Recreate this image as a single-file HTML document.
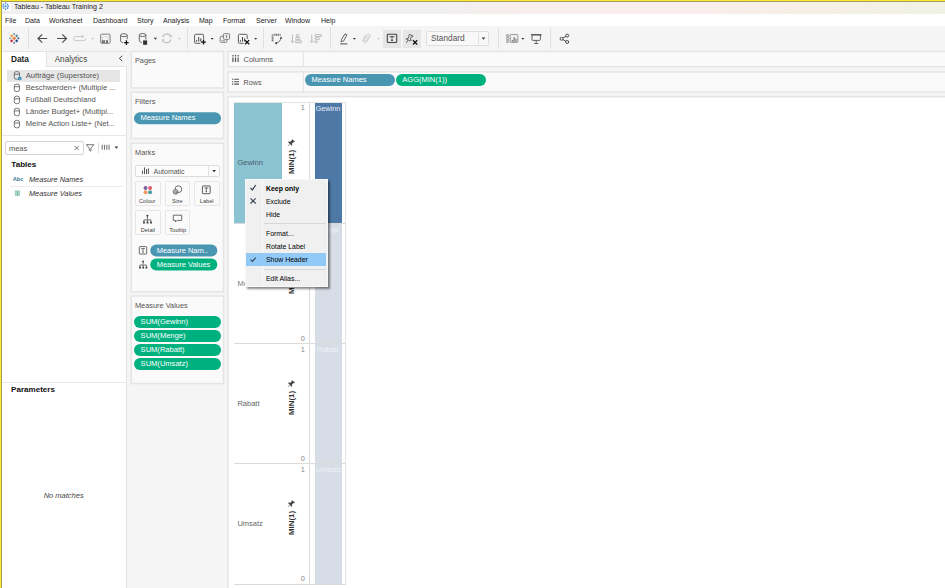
<!DOCTYPE html>
<html>
<head>
<meta charset="utf-8">
<title>Tableau - Tableau Training 2</title>
<style>
html,body{margin:0;padding:0;}
body{width:945px;height:588px;overflow:hidden;background:#fff;position:relative;font-family:"Liberation Sans",sans-serif;font-size:8.3px;color:#333;}
.a{position:absolute;box-sizing:border-box;}
.t{position:absolute;white-space:nowrap;line-height:10px;height:10px;}
.b{font-weight:bold;}
.sx{transform-origin:0 0;}
.i{font-style:italic;}
.card{position:absolute;box-sizing:border-box;background:#fafafa;border:1px solid #e3e3e3;}
.pill{position:absolute;box-sizing:border-box;border-radius:6px;color:#fff;white-space:nowrap;line-height:12px;height:12px;}
.blue{background:#4996b2;}
.green{background:#00b180;}
.mb{background:#fafafa;border:1px solid #e6e6e6;border-radius:1.5px;}
.ax{transform-origin:0 0;transform:rotate(-90deg);font-size:7.9px;color:#333;width:30px;text-align:center;}
.sep{position:absolute;width:1px;background:#e0e0e0;top:28px;height:21px;}
svg{position:absolute;overflow:visible;}
</style>
</head>
<body>

<!-- ===== title bar ===== -->
<div class="a" id="titlebar" style="left:0;top:0;width:945px;height:13.5px;background:linear-gradient(90deg,#f0f0f0 0%,#f0f0f0 45%,#f8eeec 55%,#f9eeeb 75%,#f6f0e4 88%,#f0f3e4 100%);"></div>
<div class="t sx" style="left:14px;top:2.3px;font-size:7.9px;transform:scaleX(0.898);color:#222;">Tableau - Tableau Training 2</div>

<div class="a" style="left:2px;top:2px;width:8.6px;height:9.3px;background:#fdfdfd;"></div>
<svg id="winicon" style="left:0;top:0;" width="14" height="14" viewBox="0 0 14 14" fill="none" stroke="#2b7fd0" stroke-width="0.75">
<path d="M5.6 5v2.4M4.4 6.2h2.4"/>
<path d="M5.6 2.5v1.5M4.9 3.2h1.4M5.6 8.4v1.5M4.9 9.2h1.4M2.3 6.2h1.5M3 5.5v1.4M7.4 6.2h1.5M8.2 5.5v1.4"/>
<path d="M3.6 3.6v1.6M2.8 4.4h1.6M7.6 3.6v1.6M6.8 4.4h1.6M3.6 7.2v1.6M2.8 8h1.6M7.6 7.2v1.6M6.8 8h1.6"/>
</svg>
<!-- ===== menu bar ===== -->
<div class="a" id="menubar" style="left:0;top:13.5px;width:945px;height:12.5px;background:#fff;"></div>
<div id="menu" style="color:#1a1a1a;font-size:7.9px;">
<div class="t sx" style="left:5px;top:15.6px;transform:scaleX(0.893);">File</div>
<div class="t sx" style="left:25px;top:15.6px;transform:scaleX(0.893);">Data</div>
<div class="t sx" style="left:49px;top:15.6px;transform:scaleX(0.893);">Worksheet</div>
<div class="t sx" style="left:93px;top:15.6px;transform:scaleX(0.893);">Dashboard</div>
<div class="t sx" style="left:137px;top:15.6px;transform:scaleX(0.893);">Story</div>
<div class="t sx" style="left:163px;top:15.6px;transform:scaleX(0.893);">Analysis</div>
<div class="t sx" style="left:199px;top:15.6px;transform:scaleX(0.893);">Map</div>
<div class="t sx" style="left:223px;top:15.6px;transform:scaleX(0.893);">Format</div>
<div class="t sx" style="left:256px;top:15.6px;transform:scaleX(0.893);">Server</div>
<div class="t sx" style="left:285px;top:15.6px;transform:scaleX(0.893);">Window</div>
<div class="t sx" style="left:321px;top:15.6px;transform:scaleX(0.893);">Help</div>
</div>

<!-- ===== toolbar ===== -->
<div class="a" id="toolbar" style="left:0;top:26px;width:945px;height:24.5px;background:#f5f5f5;"></div>
<!--TB-START-->
<div class="sep" style="left:28px;"></div>
<div class="sep" style="left:187px;"></div>
<div class="sep" style="left:263px;"></div>
<div class="sep" style="left:330px;"></div>
<div class="sep" style="left:498px;"></div>
<div class="sep" style="left:550px;"></div>
<div class="a" style="left:383px;top:29.5px;width:18px;height:18px;background:#e6e6e6;"></div>
<div class="a" style="left:402.7px;top:29.5px;width:18px;height:18px;background:#e6e6e6;"></div>
<div class="a" style="left:426px;top:31px;width:63px;height:14.5px;background:#f8f8f8;border:1px solid #dedede;border-radius:1.5px;"></div>
<div class="a" style="left:478px;top:32.5px;width:1px;height:11.5px;background:#e2e2e2;"></div>
<div class="t" id="std" style="left:431px;top:33.4px;font-size:8.3px;color:#555;">Standard</div>
<svg id="tbicons" style="left:0;top:0;" width="945" height="60" viewBox="0 0 945 60" fill="none" stroke-linecap="butt">
<!-- tableau logo -->
<g stroke-width="1.1">
<path d="M14.2 36.6v3.6M12.4 38.4h3.6" stroke="#e8762d" stroke-width="1.2"/>
<path d="M11.7 34.6v2.6M10.4 35.9h2.6" stroke="#eb9129"/>
<path d="M16.7 34.6v2.6M15.4 35.9h2.6" stroke="#5b879b"/>
<path d="M11.6 39.6v2.6M10.3 40.9h2.6" stroke="#c72037"/>
<path d="M16.7 39.6v2.6M15.4 40.9h2.6" stroke="#1f457e"/>
<path d="M14.2 33v2M13.2 34h2" stroke="#59879b" stroke-width="0.8"/>
<path d="M14.2 41.8v2M13.2 42.8h2" stroke="#5c6692" stroke-width="0.8"/>
<path d="M10 37.3v2M9 38.3h2" stroke="#7199a6" stroke-width="0.8"/>
<path d="M18.4 37.3v2M17.4 38.3h2" stroke="#1f457e" stroke-width="0.8"/>
</g>
<!-- back / forward -->
<g stroke="#4a4a4a" stroke-width="1.15" stroke-linejoin="miter">
<path d="M47.2 38.5H38.2M42.2 34.3L38 38.5l4.2 4.2"/>
<path d="M57 38.5h9M62.3 34.3l4.2 4.2-4.2 4.2"/>
</g>
<!-- redo (disabled) -->
<g stroke="#c9c9c9" stroke-width="1">
<path d="M83.5 36.5h-7.6a2 2 0 0 0 0 4.2h8a2 2 0 0 0 1.9-2.1"/>
<path d="M81.5 34.6l2 1.9-2 1.9"/>
</g>
<path d="M91 37.9h3l-1.5 1.9z" fill="#c4c4c4"/>
<!-- save -->
<g stroke="#757575" stroke-width="0.9">
<rect x="100.7" y="34.2" width="9.4" height="9.1" rx="0.8"/>
<path d="M102.5 40.2v-3.5h6v3.5" stroke="#d4d4d4" stroke-width="0.8"/>
</g>
<rect x="101.8" y="40.3" width="6.2" height="2.8" fill="#6a6a6a"/>
<rect x="104.9" y="40.6" width="1.2" height="2.2" fill="#f2f2f2"/>
<rect x="102.6" y="41" width="1" height="1.4" fill="#9a9a9a"/>
<!-- datasource + -->
<g stroke="#6a6a6a" stroke-width="1">
<ellipse cx="123.9" cy="35.2" rx="3.3" ry="1.5"/>
<path d="M120.6 35.2v5.8c0 .9 1.2 1.5 2.6 1.6M127.2 35.2v4"/>
</g>
<path d="M126.4 40.3v4.6M124.1 42.6h4.6" stroke="#111" stroke-width="1.3"/>
<!-- datasource pause -->
<g stroke="#6a6a6a" stroke-width="1">
<ellipse cx="142.6" cy="35" rx="3.3" ry="1.5"/>
<path d="M139.3 35v5.8c0 .9 1.2 1.5 2.6 1.6M145.9 35v4.5"/>
</g>
<rect x="143.1" y="40.4" width="4" height="4.4" fill="#333"/>
<path d="M153.8 37.8h3.2l-1.6 2z" fill="#333"/>
<!-- refresh (disabled) -->
<g stroke="#bdbdbd" stroke-width="1.1">
<path d="M162.6 37.2a4.4 4.4 0 0 1 8-1.2"/>
<path d="M171 39.4a4.4 4.4 0 0 1-8 1.2"/>
</g>
<path d="M171.6 34.6v2.6h-2.6z" fill="#c0c0c0"/>
<path d="M162 41.9v-2.6h2.6z" fill="#c0c0c0"/>
<path d="M178 37.9h3l-1.5 1.9z" fill="#c4c4c4"/>
<!-- new worksheet -->
<g stroke="#5e5e5e" stroke-width="1">
<path d="M203.6 39.5V35.300000000000004a1 1 0 0 0-1-1h-7a1 1 0 0 0-1 1v7a1 1 0 0 0 1 1h4.800000000000001"/>
<path d="M196.6 41.6v-1.6M198.7 41.6v-4.6M200.8 41.6v-3.2" stroke="#444"/>
</g>
<path d="M203.5 39.8v4.8M201.1 42.2h4.8" stroke="#111" stroke-width="1.3"/>
<path d="M210.7 37.9h3l-1.5 1.9z" fill="#333"/>
<!-- duplicate -->
<g stroke="#7e7e7e" stroke-width="1">
<rect x="223.4" y="33.7" width="6.2" height="5.6" rx="0.8"/>
<path d="M223.3 36.3h-2.2a.9.9 0 0 0-.9.900000000000001v4.200000000000001a.9.9 0 0 0 .9.9h4.800000000000001a.9.9 0 0 0 .9-.9v-2"/>
<path d="M226.5 38v-2.6M225.3 36.400000000000005l1.2-1.2 1.2 1.2" stroke-width="0.8"/>
<path d="M221.6 40.7h3.6" stroke-width="0.8"/>
</g>
<!-- clear sheet -->
<g stroke="#5e5e5e" stroke-width="1">
<path d="M247.2 39V35.300000000000004a1 1 0 0 0-1-1h-6.8a1 1 0 0 0-1 1v7a1 1 0 0 0 1 1h4.200000000000001"/>
<path d="M240.4 41.6v-1.6M242.5 41.6v-4.6M244.6 41.6v-3.2" stroke="#444"/>
</g>
<path d="M245 40.1l4.200000000000001 4.200000000000001M249.2 40.1l-4.200000000000001 4.200000000000001" stroke="#111" stroke-width="1.3"/>
<path d="M254.2 37.9h3l-1.5 1.9z" fill="#333"/>
<!-- swap -->
<g stroke="#555" stroke-width="1.9" stroke-dasharray="1.1 0.8">
<path d="M272.6 34.5v7.6"/>
<path d="M274.4 34.7h6.2"/>
</g>
<path d="M281 37.4c0 3-2.4 5.600000000000001-5.600000000000001 5.800000000000001" stroke="#555" stroke-width="0.9"/>
<path d="M279.7 38.6l1.4-2.2 1.2 2.3z" fill="#444"/>
<path d="M277 41.8l-2.4 1.4 2.3 1.3z" fill="#444"/>
<!-- sort asc (disabled) -->
<g stroke="#bcbcbc" stroke-width="1">
<path d="M292.4 34.6v7.8M290.8 40.8l1.6 1.7 1.6-1.7"/>
<rect x="296.2" y="34.6" width="2.6" height="1.9" rx="0.6"/>
<rect x="295.7" y="37.7" width="4.4" height="1.9" rx="0.6"/>
<rect x="295.3" y="40.8" width="6.4" height="1.9" rx="0.6"/>
</g>
<!-- sort desc (disabled) -->
<g stroke="#bcbcbc" stroke-width="1">
<path d="M311.8 34.6v7.8M310.2 40.8l1.6 1.7 1.6-1.7"/>
<rect x="315" y="34.6" width="6.6" height="1.9" rx="0.6"/>
<rect x="315" y="37.7" width="4.4" height="1.9" rx="0.6"/>
<rect x="315" y="40.8" width="2.2" height="1.9" rx="0.6"/>
</g>
<!-- highlighter pen -->
<g stroke="#555" stroke-width="0.9" stroke-linejoin="round">
<path d="M345 33.8l1.900000000000001 1L343.6 41l-2.6.9.6-2.600000000000001z"/>
</g>
<path d="M340.2 43.9h7.2" stroke="#3c3c3c" stroke-width="0.9"/>
<path d="M352.9 37.9h3l-1.5 1.9z" fill="#333"/>
<!-- paperclip (disabled) -->
<path transform="translate(1 0)" d="M367.6 36.2l-2.8 4.6a1 1 0 0 1-1.7-1l3-5a1.6 1.600000000000001 0 0 1 2.8 1.6l-3.2 5.4a2.2 2.2 0 0 1-3.7-2.2l2.600000000000001-4.4" stroke="#c6c6c6" stroke-width="0.9"/>
<path d="M377.1 37.9h2.8l-1.4 1.8z" fill="#c8c8c8"/>
<!-- T labels button -->
<rect x="387.3" y="34.3" width="9.4" height="8.2" rx="0.8" stroke="#444" stroke-width="1.1"/>
<path d="M389.6 36.6h4.800000000000001M392 36.6v4M391 40.6h2" stroke="#444" stroke-width="0.9"/>
<!-- pin x -->
<g stroke="#4a4a4a" stroke-width="0.85" stroke-linejoin="round">
<path d="M409.3 34.4l3.600000000000001 1.4-.4 1-1-.2-1.2 2.4 1 1.200000000000001-.6.8-4.4-1.7.4-.8 1.4 0 1.200000000000001-2.600000000000001-.6-.7z"/>
<path d="M408 40.2l-1.7 2.6"/>
</g>
<path d="M413 40.3l4.200000000000001 4.200000000000001M417.2 40.3l-4.200000000000001 4.200000000000001" stroke="#111" stroke-width="1.3"/>
<!-- Standard dropdown arrow -->
<path d="M481.7 37.6h3.6l-1.8 2.1z" fill="#333"/>
<!-- show me -->
<g stroke="#8a8a8a" stroke-width="0.9">
<rect x="510.2" y="34.6" width="7.6" height="7.8" rx="0.7"/>
<rect x="506.4" y="34.6" width="2.4" height="1.8" rx="0.6"/>
<rect x="506.4" y="37.6" width="2.4" height="1.8" rx="0.6"/>
<rect x="506.4" y="40.6" width="2.4" height="1.8" rx="0.6"/>
</g>
<path d="M512.3 41.8v-1.8M514.1 41.8v-4.8M515.9 41.8v-3" stroke="#666" stroke-width="1.1"/>
<path d="M521.3 37.9h3l-1.5 1.9z" fill="#333"/>
<!-- presentation -->
<g stroke="#555" stroke-width="0.9">
<path d="M531 34.8h10.4" stroke-width="1.5"/>
<path d="M532 35.2v4.4a.8.8 0 0 0 .8.8h6.800000000000001a.8.8 0 0 0 .8-.8v-4.4"/>
<path d="M536.2 40.4v2.8M534.2 43.5h4" />
</g>
<!-- share -->
<g stroke="#444" stroke-width="0.95">
<circle cx="561.6" cy="38.8" r="1.5"/>
<circle cx="567.2" cy="35.6" r="1.5"/>
<circle cx="567.2" cy="42" r="1.5"/>
<path d="M562.9 38l3-1.7M562.9 39.6l3 1.7"/>
</g>
</svg>
<!--TB-END-->

<!-- ===== left data pane ===== -->
<div class="a" id="datapane" style="left:0;top:50.5px;width:126.5px;height:538px;background:#fff;border-right:1px solid #e3e3e3;border-top:1px solid #e3e3e3;"></div>
<!--DP-START-->
<div class="a" style="left:46px;top:50.5px;width:80.5px;height:16px;background:#f5f5f5;border:1px solid #e3e3e3;border-right:none;"></div>
<div class="t b" style="left:11px;top:54px;font-size:8.3px;color:#222;">Data</div>
<div class="t" style="left:54.7px;top:54.7px;font-size:8.15px;color:#444;">Analytics</div>
<div class="a" style="left:7px;top:70px;width:113px;height:11.5px;background:#e6e6e6;"></div>
<div id="dslist" style="font-size:7.64px;color:#555;">
<div class="t" style="left:25.7px;top:70.8px;">Aufträge (Superstore)</div>
<div class="t" style="left:25.7px;top:82.8px;">Beschwerden+ (Multiple ...</div>
<div class="t" style="left:25.7px;top:94.9px;">Fußball Deutschland</div>
<div class="t" style="left:25.7px;top:107px;">Länder Budget+ (Multipl...</div>
<div class="t" style="left:25.7px;top:119.1px;">Meine Action Liste+ (Net...</div>
</div>
<div class="a" style="left:2px;top:135px;width:124px;height:1px;background:#e6e6e6;"></div>
<div class="a" style="left:5px;top:141px;width:79px;height:14px;background:#fff;border:1px solid #d2d2d2;border-radius:2px;"></div>
<div class="t" style="left:8.9px;top:143.6px;font-size:7.5px;color:#555;">meas</div>
<div class="a" style="left:97.5px;top:142.5px;width:1px;height:10.5px;background:#dcdcdc;"></div>
<div class="t b" style="left:11.3px;top:160.1px;font-size:8.1px;color:#111;">Tables</div>
<div class="t" style="left:12.7px;top:174.4px;font-size:5.7px;font-weight:bold;color:#3a7a9b;">Abc</div>
<div class="t i" style="left:28.9px;top:174.7px;font-size:7.4px;color:#333;">Measure Names</div>
<div class="a" style="left:9.5px;top:186px;width:113px;height:1px;background:#ececec;"></div>
<div class="t i" style="left:28.9px;top:188.7px;font-size:7.4px;color:#333;">Measure Values</div>
<div class="a" style="left:2px;top:382px;width:124px;height:1px;background:#e6e6e6;"></div>
<div class="t b" style="left:11.1px;top:384.6px;font-size:8.05px;color:#111;">Parameters</div>
<div class="t i" style="left:43.7px;top:491px;font-size:7.5px;color:#444;">No matches</div>
<svg id="dpicons" style="left:0;top:0;" width="130" height="200" viewBox="0 0 130 200" fill="none">
<path d="M122.3 55.8l-3 2.6 3 2.6" stroke="#444" stroke-width="0.95"/>
<g stroke="#5a5a5a" stroke-width="0.85">
<rect x="14.3" y="71.6" width="5.2" height="7.6" rx="2"/><path d="M14.3 74.2h5.2"/>
<rect x="14.3" y="84.1" width="5.2" height="7.4" rx="2"/><path d="M14.3 86.7h5.2"/>
<rect x="14.3" y="96.2" width="5.2" height="7.4" rx="2"/><path d="M14.3 98.8h5.2"/>
<rect x="14.3" y="108.3" width="5.2" height="7.4" rx="2"/><path d="M14.3 110.9h5.2"/>
<rect x="14.3" y="120.4" width="5.2" height="7.4" rx="2"/><path d="M14.3 123h5.2"/>
</g>
<circle cx="19.7" cy="78.4" r="2.3" fill="#e6e6e6"/>
<circle cx="19.7" cy="78.4" r="1.9" fill="#2b83b0"/>
<path d="M18.8 78.5l.7.7 1.1-1.400000000000001" stroke="#fff" stroke-width="0.5"/>
<path d="M74.6 145.9l4.2 4.2M78.8 145.9l-4.2 4.2" stroke="#555" stroke-width="0.8"/>
<path d="M86.3 144.7h7.6l-3 3.4v3l-1.6-.8v-2.2z" stroke="#555" stroke-width="0.8" stroke-linejoin="round"/>
<path d="M102.2 144.8v5M104.5 144.8v5M106.8 144.8v5M109.1 144.8v5" stroke="#7c7c7c" stroke-width="1.1"/>
<path d="M114.6 146.6h3.6l-1.8 2.1z" fill="#333"/>
<path d="M15.9 190.5v5.4M17.4 190.5v5.4M19 190.5v5.4" stroke="#3fa27a" stroke-width="0.9"/>
<path d="M14.6 192.1h5.8M14.6 194.3h5.8" stroke="#a6d6c1" stroke-width="0.6"/>
</svg>
<!--DP-END-->

<!-- ===== middle column ===== -->
<div class="a" id="midcol" style="left:126.5px;top:50.5px;width:101px;height:538px;background:#f5f5f5;"></div>
<div class="a" id="shelfbg" style="left:227.5px;top:50.5px;width:718px;height:46px;background:#f5f5f5;"></div>
<svg id="frames" style="left:0;top:0;" width="945" height="588" viewBox="0 0 945 588" fill="#fafafa" stroke="#e5e5e5" stroke-width="1.5">
<rect x="131.3" y="51.45" width="92.2" height="36.4"/>
<rect x="131.3" y="92.3" width="92.2" height="46.3"/>
<rect x="131.3" y="143.2" width="92.2" height="148.55"/>
<rect x="131.3" y="296" width="92.2" height="87.6"/>
<rect x="228.1" y="51.45" width="740" height="15.3"/>
<rect x="228.1" y="71.85" width="740" height="20.25"/>
<rect x="227.9" y="96.7" width="740" height="520" fill="#fff"/>
<path d="M303.4 52.2v13.8M303.4 72.6v18.8" stroke-width="1.2" fill="none"/>
</svg>
<!--MC-START-->
<div class="t" style="left:135px;top:56.2px;font-size:7.3px;color:#555;">Pages</div>
<div class="t" style="left:135px;top:96.5px;font-size:7.5px;color:#555;">Filters</div>
<div class="pill blue" style="left:134px;top:112px;transform:translateY(0.3px);width:87px;font-size:7.5px;padding-left:6.4px;">Measure Names</div>
<div class="t" style="left:135.1px;top:148px;font-size:7.35px;color:#555;">Marks</div>
<div class="a" style="left:135px;top:164.5px;width:85px;height:12.5px;background:#fcfcfc;border:1px solid #dcdcdc;border-radius:1.5px;"></div>
<div class="a" style="left:208px;top:165.5px;width:1px;height:10.5px;background:#e2e2e2;"></div>
<div class="t" style="left:153.5px;top:166.6px;font-size:7px;color:#555;">Automatic</div>
<div class="a mb" style="left:135px;top:181px;width:26px;height:25px;"></div>
<div class="a mb" style="left:164.5px;top:181px;width:25.5px;height:25px;"></div>
<div class="a mb" style="left:194px;top:181px;width:26px;height:25px;"></div>
<div class="a mb" style="left:135px;top:210px;width:26px;height:25px;"></div>
<div class="a mb" style="left:164.5px;top:210px;width:25.5px;height:25px;"></div>
<div class="t" style="left:139px;top:196.4px;font-size:5.6px;color:#444;">Colour</div>
<div class="t" style="left:171.9px;top:196.4px;font-size:5.5px;color:#444;">Size</div>
<div class="t" style="left:199.8px;top:196.4px;font-size:5.6px;color:#444;">Label</div>
<div class="t" style="left:140.7px;top:225.3px;font-size:5.6px;color:#444;">Detail</div>
<div class="t" style="left:169.3px;top:225.3px;font-size:5.85px;color:#444;">Tooltip</div>
<div class="pill blue" style="left:150px;top:244px;transform:translate(0.3px,0.5px);width:67.3px;font-size:7.5px;padding-left:6.4px;">Measure Nam..</div>
<div class="pill green" style="left:150px;top:258px;transform:translate(0.3px,0.5px);width:67.3px;font-size:7.5px;padding-left:6.4px;">Measure Values</div>
<div class="t" style="left:134.9px;top:300.6px;font-size:7.4px;color:#555;">Measure Values</div>
<div class="pill green" style="left:133.5px;top:315.6px;width:87.5px;font-size:7.55px;padding-left:7.1px;">SUM(Gewinn)</div>
<div class="pill green" style="left:133.5px;top:329.6px;width:87.5px;font-size:7.55px;padding-left:7.1px;">SUM(Menge)</div>
<div class="pill green" style="left:133.5px;top:343.6px;width:87.5px;font-size:7.55px;padding-left:7.1px;">SUM(Rabatt)</div>
<div class="pill green" style="left:133.5px;top:357.6px;width:87.5px;font-size:7.55px;padding-left:7.1px;">SUM(Umsatz)</div>
<svg id="mcicons" style="left:0;top:0;" width="230" height="280" viewBox="0 0 230 280" fill="none">
<path d="M142.5 174v-3.4M144.5 174v-6.6M146.5 174v-5M148.4 174v-5.6" stroke="#555" stroke-width="1"/>
<path d="M212.2 170h3.8l-1.9 2.2z" fill="#333"/>
<circle cx="145.5" cy="188" r="1.95" fill="#79629f"/>
<circle cx="150.1" cy="188" r="1.95" fill="#e3596f"/>
<circle cx="145.5" cy="192.2" r="1.95" fill="#f09a62"/>
<circle cx="150.1" cy="192.2" r="1.95" fill="#4e9a9c"/>
<g stroke="#4a4a4a" stroke-width="0.8">
<circle cx="178.4" cy="189.2" r="3.4"/>
<circle cx="175.6" cy="191.8" r="2.4" fill="#fafafa"/>
<circle cx="175.8" cy="192" r="1.1"/>
<rect x="202.4" y="185.9" width="7.8" height="7.8" rx="0.8" stroke-width="0.9"/>
<path d="M204.3 187.9h4M206.3 187.9v3.8M205.5 191.7h1.6"/>
<path d="M147.4 216.6v2.6M143.9 221.9v-2h7v2M147.4 219.7v2.2"/>
<path d="M173.3 215.2h8.4v5.2h-4.6l-1.6 1.6v-1.6h-2.2z" stroke-linejoin="round"/>
<rect x="139.3" y="246.6" width="7.4" height="7.4" rx="0.6"/>
<path d="M141.1 248.6h3.8M143 248.6v3.6M142.2 252.2h1.6" stroke-width="0.75"/>
<path d="M143.1 262v2.2M139.9 267v-2h6.4v2M143.1 264.8v2.2" stroke-width="0.75"/>
</g>
<circle cx="147.4" cy="215.8" r="1" fill="#333"/>
<rect x="143.1" y="221.7" width="1.8" height="1.8" fill="#333"/><rect x="146.6" y="221.7" width="1.8" height="1.8" fill="#333"/><rect x="150.1" y="221.7" width="1.8" height="1.8" fill="#333"/>
<circle cx="143.1" cy="261.4" r="0.9" fill="#333"/>
<rect x="139.2" y="266.8" width="1.7" height="1.7" fill="#333"/><rect x="142.4" y="266.8" width="1.7" height="1.7" fill="#333"/><rect x="145.6" y="266.8" width="1.7" height="1.7" fill="#333"/>
</svg>
<!--MC-END-->

<!-- ===== shelves ===== -->
<!--SH-START-->
<div class="t" style="left:243.5px;top:54.8px;font-size:7.5px;color:#555;">Columns</div>
<div class="t" style="left:243.5px;top:77.7px;font-size:7.2px;color:#555;">Rows</div>
<div class="pill blue" style="left:305px;top:74px;width:89.5px;font-size:7.5px;padding-left:6.6px;">Measure Names</div>
<div class="pill green" style="left:396px;top:74px;width:89.5px;font-size:7.5px;padding-left:6.3px;">AGG(MIN(1))</div>
<svg id="shicons" style="left:0;top:0;" width="300" height="100" viewBox="0 0 300 100" fill="none">
<g stroke="#555" stroke-width="1.2">
<path d="M232.9 57.4v4.6M235.5 57.4v4.6M238.1 57.4v4.6"/>
<path d="M232.9 55.1v1.3M235.5 55.1v1.3M238.1 55.1v1.3"/>
<path d="M234.2 79.3h4.8M234.2 81.7h4.8M234.2 84.1h4.8" stroke-width="1.1"/>
<path d="M232 79.3h1.3M232 81.7h1.3M232 84.1h1.3" stroke-width="1.1"/>
</g>
</svg>
<!--SH-END-->

<!-- ===== view ===== -->
<!--VW-START-->
<!-- header cells -->
<div class="a" style="left:234px;top:102.5px;width:48px;height:120.5px;background:#8cc3d3;"></div>
<!-- pane borders -->
<div class="a" style="left:234px;top:102px;width:112px;height:1px;background:#e4e4e4;"></div>
<div class="a" style="left:234px;top:223px;width:112px;height:1px;background:#dadada;"></div>
<div class="a" style="left:234px;top:343px;width:112px;height:1px;background:#dadada;"></div>
<div class="a" style="left:234px;top:463px;width:112px;height:1px;background:#dadada;"></div>
<div class="a" style="left:234px;top:583.5px;width:112px;height:1px;background:#dadada;"></div>
<div class="a" style="left:345px;top:102px;width:1px;height:482px;background:#e4e4e4;"></div>
<div class="a" style="left:309px;top:102.5px;width:1px;height:481px;background:#dadada;"></div>
<!-- bars -->
<div class="a" style="left:314.7px;top:102.5px;width:27px;height:120.5px;background:#4e79a7;"></div>
<div class="a" style="left:314.7px;top:223.5px;width:27px;height:119.5px;background:#d6dde6;"></div>
<div class="a" style="left:314.7px;top:343.5px;width:27px;height:119.5px;background:#d6dde6;"></div>
<div class="a" style="left:314.7px;top:463.5px;width:27px;height:120px;background:#d6dde6;"></div>
<!-- header labels -->
<div class="t" style="left:237.4px;top:158.3px;font-size:7.5px;color:#4a6068;">Gewinn</div>
<div class="t" style="left:237.4px;top:278.7px;font-size:7.5px;color:#777;height:7.3px;overflow:hidden;">Menge</div>
<div class="t" style="left:237.4px;top:399.3px;font-size:7.5px;color:#666;">Rabatt</div>
<div class="t" style="left:237.4px;top:519.4px;font-size:7.5px;color:#666;">Umsatz</div>
<!-- tick labels -->
<div id="ticks" style="font-size:7.4px;color:#888;">
<div class="t" style="left:300.8px;top:103.4px;">1</div>
<div class="t" style="left:300.8px;top:333.8px;">0</div>
<div class="t" style="left:300.8px;top:344.8px;">1</div>
<div class="t" style="left:300.8px;top:453.8px;">0</div>
<div class="t" style="left:300.8px;top:464.8px;">1</div>
<div class="t" style="left:300.8px;top:574.2px;">0</div>
</div>
<!-- mark labels -->
<div class="t" style="left:315.4px;top:103.9px;font-size:7.4px;color:#e8eef5;">Gewinn</div>
<div class="t" style="left:316.6px;top:224.9px;font-size:7.4px;color:#eef2f6;">Menge</div>
<div class="t" style="left:316.8px;top:344.9px;font-size:7.4px;color:#eef2f6;">Rabatt</div>
<div class="t" style="left:315.8px;top:464.9px;font-size:7.4px;color:#eef2f6;">Umsatz</div>
<!-- axis titles (rotated) -->
<div class="t b ax" style="left:286.6px;top:177.0px;">MIN(1)</div>
<div class="t b ax" style="left:286.6px;top:297.0px;">MIN(1)</div>
<div class="t b ax" style="left:286.6px;top:417.6px;">MIN(1)</div>
<div class="t b ax" style="left:286.6px;top:537.6px;">MIN(1)</div>
<svg id="pins" style="left:0;top:0;" width="945" height="588" viewBox="0 0 945 588" fill="#444">
<g><path d="M292.6 139.4l2.400000000000001 2.400000000000001-.7.5-.7-.3-1.6 1.6.2 1.6-.6.5-1.6-1.6-2 2.200000000000001-.3-.3 2-2.200000000000001-1.6-1.600000000000001.6-.6 1.6.2 1.6-1.600000000000001-.2-.7z"/></g>
<g transform="translate(0 120)"><path d="M292.6 139.4l2.400000000000001 2.400000000000001-.7.5-.7-.3-1.6 1.6.2 1.6-.6.5-1.6-1.6-2 2.200000000000001-.3-.3 2-2.200000000000001-1.6-1.600000000000001.6-.6 1.6.2 1.6-1.600000000000001-.2-.7z"/></g><g transform="translate(0 241)"><path d="M292.6 139.4l2.400000000000001 2.400000000000001-.7.5-.7-.3-1.6 1.6.2 1.6-.6.5-1.6-1.6-2 2.200000000000001-.3-.3 2-2.200000000000001-1.6-1.600000000000001.6-.6 1.6.2 1.6-1.600000000000001-.2-.7z"/></g><g transform="translate(0 361)"><path d="M292.6 139.4l2.400000000000001 2.400000000000001-.7.5-.7-.3-1.6 1.6.2 1.6-.6.5-1.6-1.6-2 2.200000000000001-.3-.3 2-2.200000000000001-1.6-1.600000000000001.6-.6 1.6.2 1.6-1.600000000000001-.2-.7z"/></g>
</svg>
<!--VW-END-->

<!-- ===== context menu ===== -->
<!--CX-START-->
<div class="a" id="ctx" style="left:244.5px;top:179px;width:83.5px;height:107.5px;background:#f0f0f0;border:1px solid #f8f8f8;box-shadow:1.5px 1.5px 2px rgba(0,0,0,0.45);"></div>
<div class="a" style="left:262px;top:180px;width:1px;height:105.5px;background:#fafafa;"></div>
<div class="a" style="left:246.3px;top:253px;width:79.4px;height:13px;background:#91c9f7;"></div>
<div class="a" style="left:263.7px;top:223.2px;width:62px;height:1px;background:#d7d7d7;"></div>
<div class="a" style="left:263.7px;top:268.7px;width:62px;height:1px;background:#d7d7d7;"></div>
<div id="ctxitems" style="font-size:7.8px;color:#000;">
<div class="t b sx" style="left:266px;top:183.8px;transform:scaleX(0.885);">Keep only</div>
<div class="t sx" style="left:266px;top:197.1px;transform:scaleX(0.885);">Exclude</div>
<div class="t sx" style="left:266px;top:210px;transform:scaleX(0.885);">Hide</div>
<div class="t sx" style="left:266px;top:228.6px;transform:scaleX(0.885);">Format...</div>
<div class="t sx" style="left:266px;top:241.6px;transform:scaleX(0.885);">Rotate Label</div>
<div class="t sx" style="left:266px;top:254.6px;transform:scaleX(0.885);">Show Header</div>
<div class="t sx" style="left:266px;top:274.1px;transform:scaleX(0.885);">Edit Alias...</div>
</div>
<svg id="ctxicons" style="left:0;top:0;" width="340" height="300" viewBox="0 0 340 300" fill="none" stroke="#3a4656">
<path d="M250.5 187.9l1.8 2 3.5-4.9" stroke-width="1.25"/>
<path d="M250.5 198.3l5.2 5.2M255.7 198.3l-5.2 5.2" stroke-width="1.2"/>
<path d="M250.6 259.6l1.8 1.8 3.4-3.8" stroke-width="1.15"/>
</svg>
<!--CX-END-->

<!-- ===== yellow frame ===== -->
<div class="a" style="left:0;top:0;width:945px;height:2px;background:linear-gradient(#feea30 0,#feea30 50%,#a39c62 50%,#a39c62 100%);"></div>
<div class="a" style="left:0;top:0;width:2px;height:588px;background:linear-gradient(90deg,#feea30 0,#feea30 50%,#a39c62 50%,#a39c62 100%);"></div>
</body>
</html>
